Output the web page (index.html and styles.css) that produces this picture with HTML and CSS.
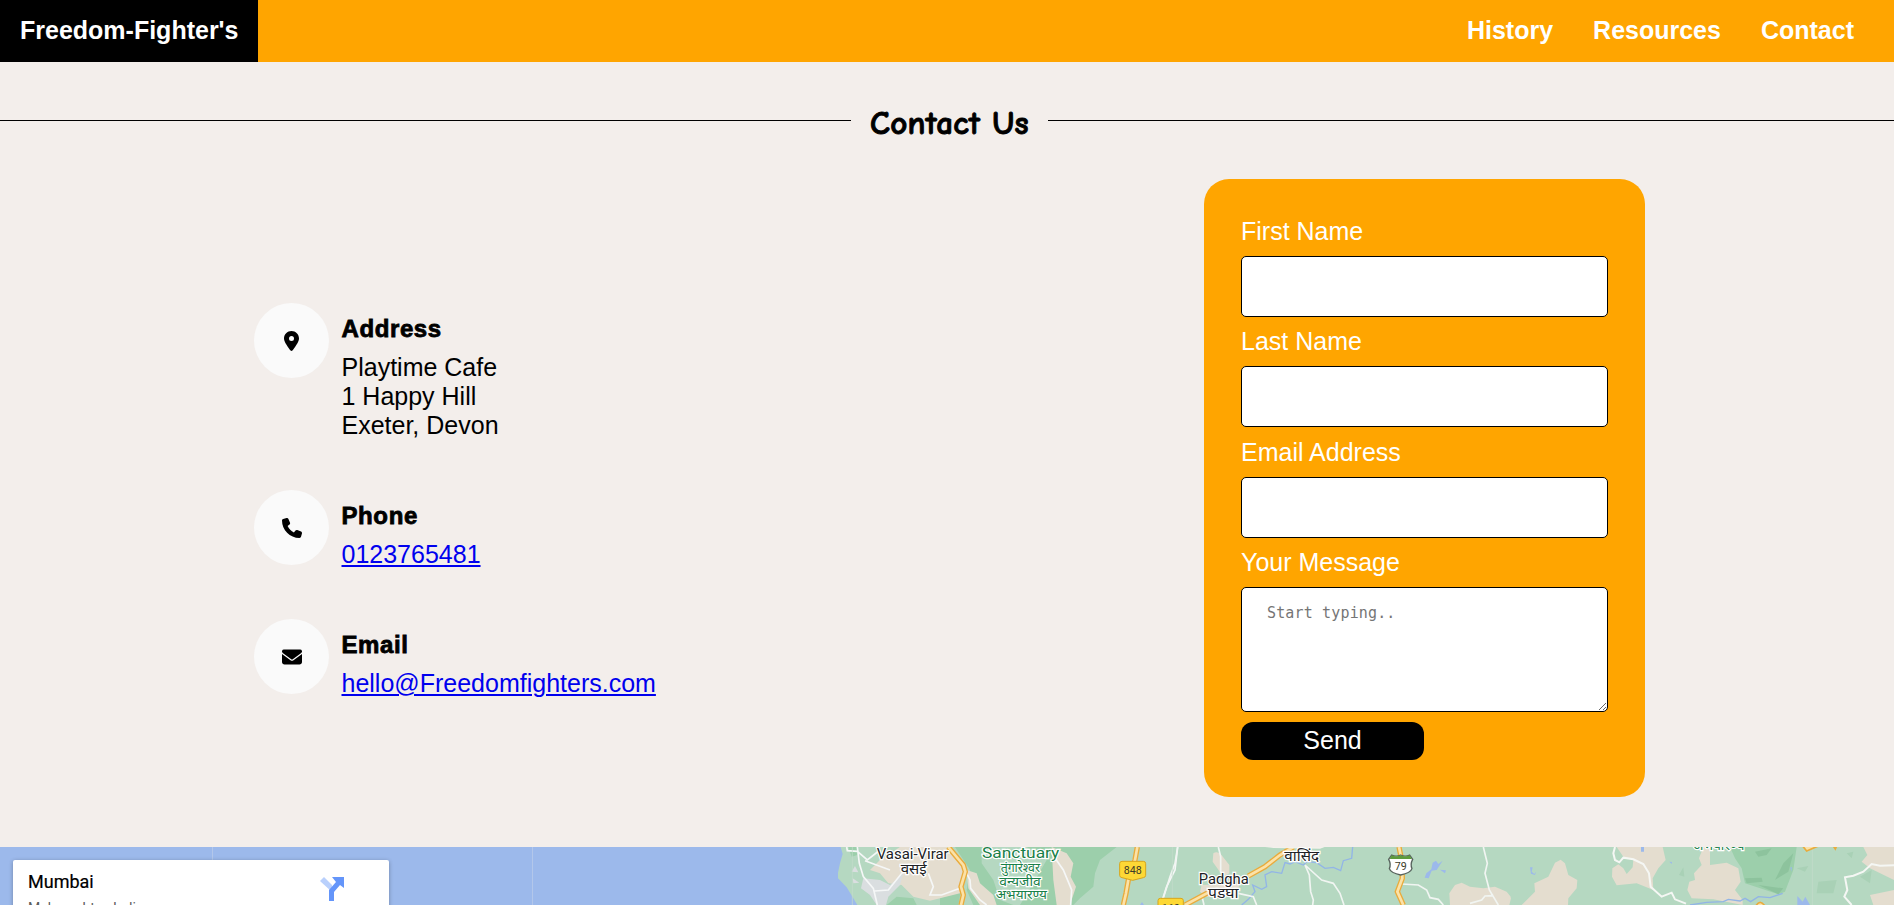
FILE: index.html
```html
<!DOCTYPE html>
<html lang="en">
<head>
<meta charset="utf-8">
<title>Contact Us</title>
<link rel="stylesheet" href="styles.css">
</head>
<body>
<nav class="navbar">
  <a class="brand">Freedom-Fighter's</a>
  <div class="links"><a>History</a><a>Resources</a><a>Contact</a></div>
</nav>
<header class="title"><span class="rule"></span><h1>Contact Us</h1><span class="rule end"></span></header>
<main class="contact">
  <section class="details">
    <div class="item">
      <span class="badge"><svg width="15" height="20" viewBox="0 0 384 512"><path d="M215.7 499.2C267 435 384 279.400 384 192 384 86 298 0 192 0S0 86 0 192c0 87.400 117 243 168.300 307.200 12.300 15.300 35.100 15.300 47.400 0zM192 128a64 64 0 1 1 0 128 64 64 0 1 1 0-128z"/></svg></span>
      <div class="info"><h2>Address</h2><p>Playtime Cafe<br>1 Happy Hill<br>Exeter, Devon</p></div>
    </div>
    <div class="item">
      <span class="badge"><svg width="20" height="20" viewBox="0 0 512 512"><path d="M164.900 24.600c-7.700-18.600-28-28.500-47.400-23.200l-88 24C12.100 30.200 0 46 0 64c0 247.400 200.600 448 448 448 18 0 33.800-12.100 38.600-29.500l24-88c5.300-19.400-4.600-39.700-23.200-47.400l-96-40c-16.300-6.800-35.200-2.100-46.300 11.600L304.700 368C234.300 334.700 177.300 277.700 144 207.300L193.300 167c13.700-11.200 18.400-30 11.600-46.300z"/></svg></span>
      <div class="info"><h2>Phone</h2><p><a href="#">0123765481</a></p></div>
    </div>
    <div class="item">
      <span class="badge"><svg width="20" height="20" viewBox="0 0 512 512"><path d="M48 64a48 48 0 0 0-28.800 86.400l217.600 163.200c11.400 8.500 27 8.500 38.400 0l217.600-163.200A48 48 0 0 0 464 64zM0 176v208c0 35.300 28.700 64 64 64h384c35.300 0 64-28.700 64-64V176L294.400 339.200a64 64 0 0 1-76.800 0z"/></svg></span>
      <div class="info"><h2>Email</h2><p><a href="#">hello@Freedomfighters.com</a></p></div>
    </div>
  </section>
  <form class="form">
    <label>First Name</label><input type="text">
    <label>Last Name</label><input type="text">
    <label>Email Address</label><input type="text">
    <label>Your Message</label><textarea placeholder="Start typing.."></textarea>
    <button type="button">Send</button>
  </form>
</main>
<section class="map">
  <svg class="tiles" width="1894" height="58" viewBox="0 0 1894 58">
    <rect width="1894" height="58" fill="#9cb9eb"/>
    <path d="M212.500 0V58M532.500 0V58" stroke="#b3c7ea"/>
    <!-- coast, Vasai-Virar and Tungareshwar -->
    <g transform="translate(780 -17) scale(.33333)">
      <path fill="#b5d8c1" d="M182 51L188 72 180 100 174 128 174 145 200 172 216 198 232 225H3400V51z"/>
      <path fill="#9ccfab" d="M525 51H605V100L640 150 660 210 700 225H580L560 180 570 120zM740 51H1010L960 90 945 130 940 170 900 205 880 225H720L760 160 800 90zM320 225L350 200 400 205 410 225zM205 51H232V75L215 80zM480 195L545 170 535 225H480z"/>
      <path fill="#e4ddcf" d="M360 51H500L535 90 550 120 540 190 450 212 400 200 365 165 325 160 300 130 270 120 300 90zM560 120L590 130 600 160 640 195 650 225H600L565 175zM815 51L860 70 880 100 872 140 888 170 870 225H830L820 150z"/>
      <path fill="#dadee0" d="M250 145L300 150 330 165 370 130 360 165 325 200 318 225H290L270 195 243 175zM215 125L225 108 235 127zM218 145L238 158 220 160z"/>
      <path fill="none" stroke="#f5f7f7" stroke-width="5" d="M232 51L238 100 250 140 280 175 292 225M284 183L325 180 365 130 400 115M200 51L202 62 232 64 262 90 300 60M255 92L330 120M445 130L460 170 450 195 485 195 540 175M555 120L570 150 572 175 600 210 620 225M815 70L850 120 875 180 872 225M1193 51L1185 120 1160 170 1147 210"/>
      <path d="M217 51V225" stroke="#c4dccb" stroke-width="2"/>
      <g fill="none" stroke-linejoin="round"><path stroke="#e9ab3c" stroke-width="16" d="M505 51L525 75 550 105 556 125 543 170 550 195 543 225M1072 51L1065 90 1045 150 1038 190 1030 225"/><path stroke="#fbe2a8" stroke-width="8" d="M505 51L525 75 550 105 556 125 543 170 550 195 543 225M1072 51L1065 90 1045 150 1038 190 1030 225"/></g>
      <path fill="#9cb9eb" d="M1080 225L1086 216 1092 225z"/>
      <g class="city"><text x="398" y="88" font-size="44" textLength="216" lengthAdjust="spacingAndGlyphs">Vasai-Virar</text><text x="401" y="131" font-size="42" textLength="78" lengthAdjust="spacingAndGlyphs">वसई</text></g>
      <g class="park"><text x="722" y="83" font-size="46" textLength="232" lengthAdjust="spacingAndGlyphs">Sanctuary</text><text x="721" y="126" font-size="40" textLength="118" lengthAdjust="spacingAndGlyphs">तुंगारेश्वर</text><text x="720" y="167" font-size="40" textLength="124" lengthAdjust="spacingAndGlyphs">वन्यजीव</text><text x="724" y="208" font-size="40" textLength="154" lengthAdjust="spacingAndGlyphs">अभयारण्य</text></g>
      <path fill="#fdd835" stroke="#d7a51c" stroke-width="3" d="M1026 94H1090Q1097 94 1097 101V136Q1097 142 1090 143L1058 151 1026 143Q1019 142 1019 136V101Q1019 94 1026 94z"/>
      <text class="shield" x="1058" y="132" font-size="32" textLength="54" lengthAdjust="spacingAndGlyphs">848</text>
    </g>
    <!-- Padgha and Vasind -->
    <g transform="translate(1130 -17) scale(.33333)">
      <path fill="#e4ddcf" d="M250 70Q260 62 272 72L298 105 298 130 280 140 248 95zM215 165L330 160 320 190 230 200 210 185zM958 190L975 165 995 158 1020 170 1060 175 1095 170 1130 185 1142 200 1135 225H960z"/>
      <path fill="none" stroke="#92b5e7" stroke-width="4" d="M668 51L665 85 640 92 632 122 610 112 585 115 560 98 530 95 520 105 495 95 480 102 465 98 455 130 425 125 405 135 410 170 395 178 368 165 375 185 355 208 335 225"/>
      <path fill="#9cb9eb" d="M908 98L918 92 925 102 938 92 920 120 905 122 896 145 884 143 889 130 904 118zM930 119L948 121 945 130z"/>
      <path fill="none" stroke="#f1f5f2" stroke-width="5" d="M143 51L135 100 120 140 98 210M265 51L272 80 272 130M525 105L538 135 542 185 550 210 548 225M525 105L575 150 610 160 630 190 642 225M815 162L865 165 890 180 900 203 925 208 940 225M1060 51L1072 100 1065 130 1078 180 1090 200 1105 225M1090 197L1065 198 1055 210 1020 220M325 190L370 200 380 225M215 195L222 225"/>
      <path fill="none" stroke="#e9ab3c" stroke-width="16" d="M490 51L450 75 405 110 355 138M240 185L165 225M807 51L815 90 817 145 802 185 820 225"/>
      <path fill="none" stroke="#fbe2a8" stroke-width="8" d="M490 51L450 75 405 110 355 138M240 185L165 225M807 51L815 90 817 145 802 185 820 225"/>
      <path fill="#f3f1ec" d="M405 51H584L570 56 430 54z"/>
      <path d="M127 51V225" stroke="#c4dccb" stroke-width="2"/>
      <g class="city"><text x="515" y="93" font-size="41" textLength="104" lengthAdjust="spacingAndGlyphs">वासिंद</text><text x="281" y="161" font-size="44" textLength="150" lengthAdjust="spacingAndGlyphs">Padgha</text><text x="280" y="203" font-size="41" textLength="92" lengthAdjust="spacingAndGlyphs">पडघा</text></g>
      <rect x="84" y="205" width="76" height="50" rx="7" fill="#fdd835" stroke="#d7a51c" stroke-width="3"/>
      <text class="shield" x="122" y="246" font-size="32" textLength="54" lengthAdjust="spacingAndGlyphs">160</text>
      <path fill="#fff" stroke="#57635d" stroke-width="4" d="M785 75Q798 82 812 75 826 82 839 75L848 88Q840 103 846 116 842 129 812 135 782 129 778 116 784 103 776 88z"/>
      <path fill="#5c9b3b" d="M785 76Q798 83 812 76 826 83 839 76L845 87H779z"/>
      <text class="shield" x="812" y="119" font-size="33" textLength="36" lengthAdjust="spacingAndGlyphs">79</text>
    </g>
    <!-- eastern hills -->
    <g transform="translate(1500 -17) scale(.33333)">
      <path fill="#e4ddcf" d="M0 182Q20 182 33 205L28 225H0zM65 225L105 185 103 160 145 140 165 98 182 89 195 100 205 135 232 150 230 175 205 205 204 225zM350 51H488L497 90 475 115 458 145 460 180 410 160 350 166 336 140 337 115 355 103 370 115 380 132 398 112 400 90 370 80zM610 51H630V105L680 98 715 115 722 155 705 180 728 210V225L640 208 575 205 562 180 568 155 585 150 582 130 605 105 597 85zM1090 51H1182V150L1110 115 1085 95 1102 75zM1110 195L1182 180V225H1120z"/>
      <path fill="#9ccfab" d="M690 51H890L880 120 855 185 835 193 735 160 725 115 705 85z"/>
      <path fill="#8dc39d" d="M765 65L815 55 800 75 775 80zM880 70L865 125 825 150 850 100zM735 145L785 143 788 155 740 160zM775 165L850 175 835 193z"/>
      <path fill="#a9d1b6" d="M537 135L550 112 553 140zM890 115L925 108 915 125zM955 155L1010 150 1000 190 950 190zM1040 70L1060 65 1055 85zM1080 140L1115 120 1110 160z"/>
      <path fill="none" stroke="#f5f7f4" stroke-width="6" d="M345 51L340 70 345 90 358 97 370 83 400 88 430 102 447 130 452 170 485 200 515 188 525 208 558 221M1182 106L1140 107 1115 102 1090 125 1060 137 1035 142 1042 180 1033 200 1055 225"/>
      <path fill="none" stroke="#91b4e6" stroke-width="4" d="M570 225L620 217 670 215 685 208 720 213 735 205 752 215 775 200 810 203 848 190"/>
      <path fill="#9cb9eb" d="M423 51H432V65H423zM90 112L98 112 95 125 103 132 108 125 105 135 93 131zM892 198L908 215 916 200 930 225H892zM508 95L516 96 515 102zM871 112L876 112 874 125z"/>
      <path d="M937 51V225" stroke="#c4dccb" stroke-width="2"/>
      <path fill="#fbe2a8" stroke="#e9ab3c" stroke-width="5" d="M908 48L920 63 955 48M1000 48L1006 57 1010 48M768 227Q780 207 794 227"/>
      <g class="park"><text x="656" y="59" font-size="40" textLength="154" lengthAdjust="spacingAndGlyphs">अभयारण्य</text></g>
    </g>
  </svg>
  <div class="place">
    <div><strong>Mumbai</strong><p>Maharashtra, India</p></div>
    <svg width="24" height="24" viewBox="0 0 24 24"><path fill="#b9d0fc" d="M0 4L4 0 12 8V15z"/><path fill="#6495fa" d="M12 0H24V11L20 8 14 15V24H9V13L16 5z"/></svg>
  </div>
</section>
</body>
</html>
```
FILE: styles.css
```css
* { box-sizing: border-box; margin: 0; padding: 0; }
html { overflow: hidden; }
body {
  height: 905px;
  overflow: hidden;
  display: flex;
  flex-direction: column;
  background: #f3eeeb;
  color: #000;
  font: 25px/29px "Liberation Sans", Arial, sans-serif;
}
.navbar {
  height: 62px;
  flex: none;
  display: flex;
  justify-content: space-between;
  background: #ffa500;
  color: #fff;
  font-weight: bold;
  line-height: 60px;
}
.brand { width: 258px; background: #000; padding-left: 20px; }
.links { display: flex; gap: 40px; padding-right: 40px; }
.title { height: 117px; flex: none; display: flex; align-items: flex-start; }
.rule { width: 851px; height: 1px; margin-top: 58px; background: #000; }
.rule.end { width: 846px; }
.title h1 {
  width: 197px;
  padding-top: 41px;
  text-align: center;
  white-space: nowrap;
  font: bold 33px/40px "Comic Sans MS", "Comic Neue", Lato, cursive;
  letter-spacing: .3px;
  -webkit-text-stroke: .9px #000;
}
.contact {
  height: 668px;
  flex: none;
  display: flex;
  justify-content: space-between;
  align-items: flex-start;
  padding: 0 249px 0 254px;
}
.details { padding-top: 124px; display: flex; flex-direction: column; gap: 48px; }
.item { display: flex; gap: 12.500px; }
.badge {
  width: 75px;
  height: 75px;
  border-radius: 50%;
  background: #fafafa;
  display: flex;
  align-items: center;
  justify-content: center;
}
.info { padding-top: 11px; }
.info h2 {
  font-size: 24px;
  line-height: 29px;
  letter-spacing: .6px;
  -webkit-text-stroke: .8px #000;
  margin-bottom: 12px;
}
.info p { margin-top: -2px; padding-bottom: 2px; }
.info a { color: #00e; }
.form {
  width: 441px;
  height: 618px;
  padding: 38px 37px 37px;
  border-radius: 25px;
  background: #ffa500;
  color: #fff;
  display: flex;
  flex-direction: column;
}
.form label { height: 29px; flex: none; margin-bottom: 10.200px; }
.form input, .form textarea {
  width: 367px;
  flex: none;
  border: 1px solid #000;
  border-radius: 5px;
  background: #fff;
}
.form input { height: 61px; margin-bottom: 10.100px; }
.form textarea {
  height: 125px;
  padding: 16px 25px;
  margin-bottom: 10px;
  font: 15px/18px "DejaVu Sans Mono", monospace;
  letter-spacing: .15px;
}
.form textarea::placeholder { color: #757575; }
.form button {
  width: 183px;
  height: 38px;
  border: 0;
  border-radius: 12px;
  background: #000;
  color: #fff;
  padding-bottom: 1px;
  font: 25px/29px "Liberation Sans", Arial, sans-serif;
}
.map { height: 58px; flex: none; display: grid; overflow: hidden; }
.tiles, .place { grid-area: 1 / 1; }
.tiles text { text-anchor: middle; font-family: Roboto, "Noto Sans", "Noto Sans Devanagari", sans-serif; }
.city text { fill: #202124; stroke: #fff; stroke-width: 7px; paint-order: stroke; }
.park text { fill: #188048; stroke: #fff; stroke-width: 7px; paint-order: stroke; }
.tiles .shield { fill: #3c3c28; }
.place {
  width: 376px;
  height: 90px;
  margin: 17px 13px 13px;
  padding: 11px 45px 0 15px;
  background: #fff;
  border-radius: 2px;
  box-shadow: 0 1px 4px rgba(0, 0, 0, .3);
  display: flex;
  justify-content: space-between;
  font: 14px/20px Roboto, sans-serif;
  margin-top: 13px;
}
.place strong { display: block; font-weight: 400; font-size: 18px; line-height: 22px; -webkit-text-stroke: .2px #000; }
.place p { color: #5b5b5b; margin-top: 5px; }
.place svg { margin-top: 6px; }
```
